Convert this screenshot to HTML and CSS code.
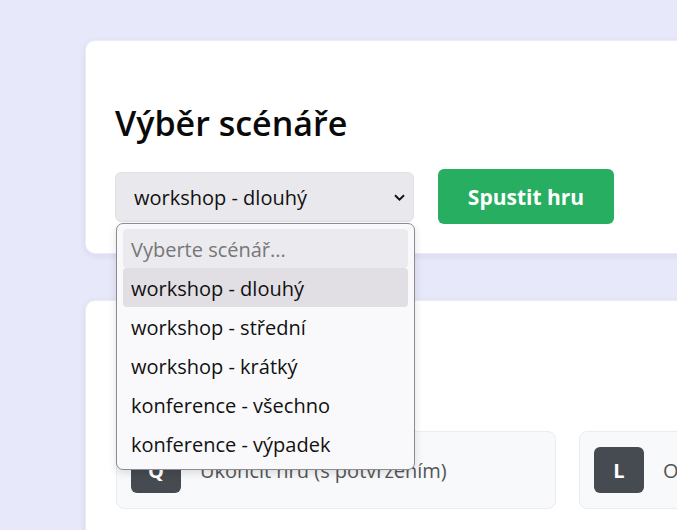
FILE: index.html
```html
<!DOCTYPE html>
<html lang="cs">
<head>
<meta charset="utf-8">
<title>Výběr scénáře</title>
<link rel="stylesheet" href="styles.css">
</head>
<body>
<div class="page">
  <section class="card card-top">
    <h2 class="title">Výběr scénáře</h2>
    <div class="row">
      <div class="select-wrap">
        <div class="select">
          <span>workshop - dlouhý</span>
          <svg class="chev" width="11" height="7" viewBox="0 0 11 7"><path d="M1 1.2 L5.5 5.6 L10 1.2" fill="none" stroke="#111" stroke-width="1.9"/></svg>
        </div>
        <ul class="dropdown">
          <li class="opt placeholder">Vyberte scénář...</li>
          <li class="opt active">workshop - dlouhý</li>
          <li class="opt">workshop - střední</li>
          <li class="opt">workshop - krátký</li>
          <li class="opt">konference - všechno</li>
          <li class="opt">konference - výpadek</li>
        </ul>
      </div>
      <button class="btn">Spustit hru</button>
    </div>
  </section>
  <section class="card card-keys">
    <div class="keys">
      <div class="key-item"><span class="badge">Q</span><span class="key-label">Ukončit hru (s potvrzením)</span></div>
      <div class="key-item"><span class="badge">L</span><span class="key-label">Odhlásit</span></div>
    </div>
  </section>
</div>
</body>
</html>
```
FILE: styles.css
```css
* { box-sizing: border-box; }
html, body { margin: 0; padding: 0; }
body {
  background: #e8e8fb;
  font-family: "Open Sans", "Noto Sans", sans-serif;
  color: #111;
  overflow: hidden;
  height: 530px;
}
.page {
  padding: 40px 0 0 85px;
  width: 1200px;
  display: flex;
  flex-direction: column;
  gap: 46px;
}
.card {
  background: #fff;
  border-radius: 10px;
  box-shadow: 0 2px 6px rgba(60, 60, 120, 0.09);
  border: 1px solid #ececf4;
}
.card-top {
  padding: 61px 30px 29px 29px;
}
.title {
  margin: 0 0 25px;
  font-size: 34px;
  font-weight: 600;
  line-height: 42px;
  letter-spacing: 0;
  color: #0a0a0a;
}
.row {
  display: flex;
  align-items: center;
  gap: 24px;
}
.select-wrap { position: relative; }
.select {
  width: 299px;
  height: 50px;
  background: #e9e8ed;
  border-radius: 6px;
  border: 1px solid #e2e1e6;
  display: flex;
  align-items: center;
  justify-content: space-between;
  padding: 2px 8px 0 18px;
  font-size: 20px;
}
.chev { display: block; }
.dropdown {
  position: absolute;
  left: 1px;
  top: 51px;
  width: 299px;
  margin: 0;
  padding: 5px 6px 6px;
  list-style: none;
  background: #f9f9fb;
  border: 1px solid #8c8c90;
  border-radius: 7px;
  box-shadow: 0 3px 8px rgba(0,0,0,0.12);
  z-index: 10;
}
.opt {
  height: 39px;
  display: flex;
  align-items: center;
  padding: 2px 0 0 8px;
  font-size: 20px;
  border-radius: 4px;
}
.opt.placeholder {
  height: 39px;
  background: #ebeaee;
  color: #777;
}
.opt.active { background: #e1dfe4; }
.btn {
  width: 176px;
  height: 55px;
  border: none;
  border-radius: 6px;
  background: #27ae60;
  color: #fff;
  font-family: inherit;
  font-size: 21px;
  font-weight: 700;
}
.card-keys {
  padding: 130px 30px 40px 30px;
}
.keys {
  display: flex;
  gap: 23px;
}
.key-item {
  width: 440px;
  height: 78px;
  background: #f8f9fa;
  border: 1px solid #ececef;
  border-radius: 8px;
  display: flex;
  align-items: center;
  padding: 0 14px;
  gap: 19px;
  flex: none;
}
.badge {
  width: 50px;
  height: 46px;
  background: #464b52;
  color: #fff;
  border-radius: 6px;
  display: flex;
  align-items: center;
  justify-content: center;
  font-weight: 700;
  font-size: 20px;
  flex: none;
}
.key-label {
  color: #555;
  font-size: 20px;
  white-space: nowrap;
}
```
